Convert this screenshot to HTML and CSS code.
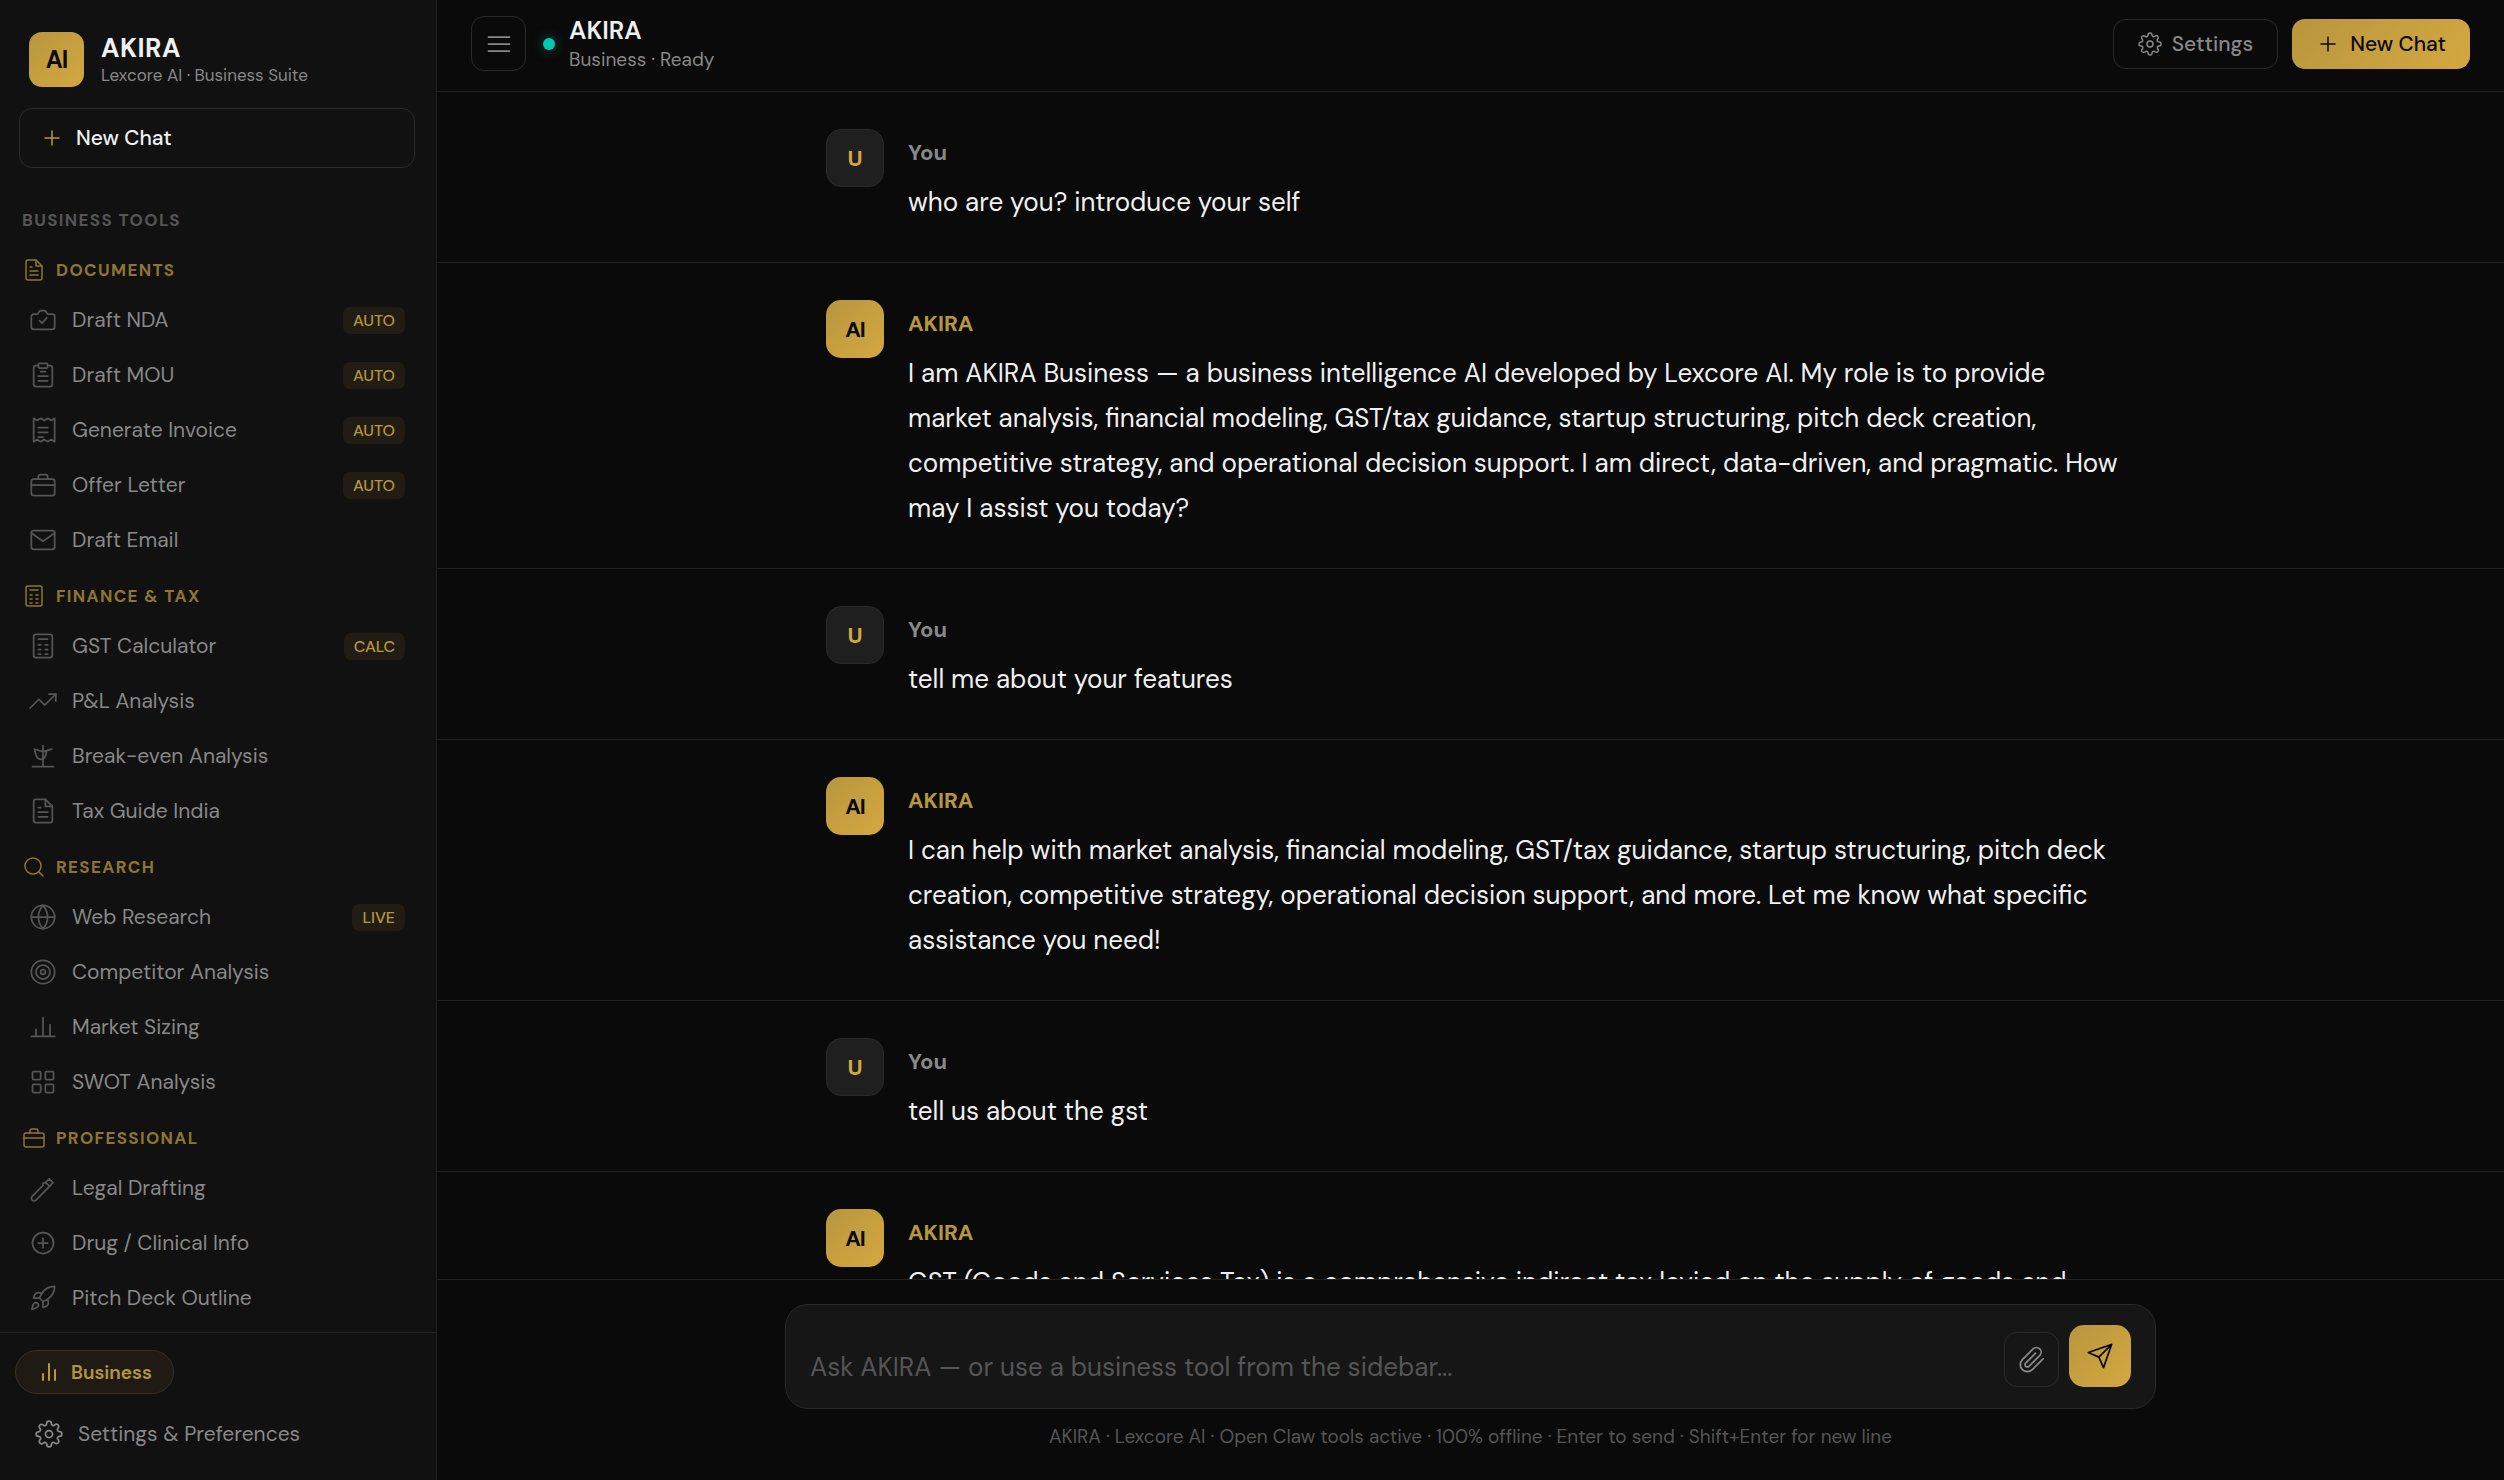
FILE: index.html
```html
<!DOCTYPE html>
<html lang="en">
<head>
    <meta charset="UTF-8">
    <meta name="viewport" content="width=device-width, initial-scale=1.0">
    <title>AKIRA Business</title>
    <link rel="stylesheet" href="styles.css">
</head>
<body>
    <!-- Icon set -->
    <svg class="icon-set" aria-hidden="true">
        <symbol id="i-plus" viewBox="0 0 24 24"><path d="M12 5v14M5 12h14"/></symbol>
        <symbol id="i-file" viewBox="0 0 24 24"><path d="M14 2H6a2 2 0 0 0-2 2v16a2 2 0 0 0 2 2h12a2 2 0 0 0 2-2V8z"/><path d="M14 2v6h6M8 9h2M8 13h8M8 17h8"/></symbol>
        <symbol id="i-nda" viewBox="0 0 24 24"><path d="M20 7h-3.2c-.6 0-1-.3-1.3-.8l-1-1.4A2 2 0 0 0 12.900 4h-2.600a2 2 0 0 0-1.500.8l-1 1.400c-.3.5-.8.8-1.300.8H4a2 2 0 0 0-2 2v9a2 2 0 0 0 2 2h16a2 2 0 0 0 2-2V9a2 2 0 0 0-2-2z"/><path d="M9 12.500l2.200 2.200 4-4.500"/></symbol>
        <symbol id="i-clipboard" viewBox="0 0 24 24"><path d="M16 4h2a2 2 0 0 1 2 2v14a2 2 0 0 1-2 2H6a2 2 0 0 1-2-2V6a2 2 0 0 1 2-2h2"/><rect x="8" y="2" width="8" height="4" rx="1"/><path d="M10 9h4M8 13h8M8 17h8"/></symbol>
        <symbol id="i-receipt" viewBox="0 0 24 24"><path d="M4 2v20l3-1.800 3 1.800 3-1.800 3 1.800 3-1.800 3 1.800V2l-3 1.800L16 2l-3 1.800L10 2 7 3.800z"/><path d="M8 10h8M8 14h8M8 18h4"/></symbol>
        <symbol id="i-briefcase" viewBox="0 0 24 24"><rect x="2" y="7" width="20" height="14" rx="2"/><path d="M16 7V5a2 2 0 0 0-2-2h-4a2 2 0 0 0-2 2v2M2 12h20"/></symbol>
        <symbol id="i-mail" viewBox="0 0 24 24"><rect x="2" y="4" width="20" height="16" rx="2"/><path d="M2 6l10 7 10-7"/></symbol>
        <symbol id="i-calc" viewBox="0 0 24 24"><rect x="4" y="2" width="16" height="20" rx="2"/><path d="M8 6h8M8 11h2M14 11h2M8 15h2M14 15h2M8 19h2M14 19h2"/></symbol>
        <symbol id="i-trend" viewBox="0 0 24 24"><path d="M23 6l-9.500 9.500-5-5L1 18"/><path d="M17 6h6v6"/></symbol>
        <symbol id="i-scale" viewBox="0 0 24 24"><path d="M12 3v18M3 21h18"/><path d="M4.700 6.200l7.300 2c2.400 0 4.800-1.600 7.500-2M4.700 6.200c.6 2.800 1.200 5.600 2.600 7.400 1.400 1.700 4.600 1.700 6-.2 1.500-2 1.400-4 2-6"/></symbol>
        <symbol id="i-search" viewBox="0 0 24 24"><circle cx="11" cy="11" r="8"/><path d="M21 21l-4.350-4.350"/></symbol>
        <symbol id="i-globe" viewBox="0 0 24 24"><circle cx="12" cy="12" r="10"/><path d="M2 12h20M12 2a15.300 15.300 0 0 1 4 10 15.300 15.300 0 0 1-4 10 15.300 15.300 0 0 1-4-10 15.300 15.300 0 0 1 4-10z"/></symbol>
        <symbol id="i-target" viewBox="0 0 24 24"><circle cx="12" cy="12" r="10"/><circle cx="12" cy="12" r="6"/><circle cx="12" cy="12" r="2"/></symbol>
        <symbol id="i-bars" viewBox="0 0 24 24"><path d="M18 20V10M12 20V4M6 20v-6"/></symbol>
        <symbol id="i-sizing" viewBox="0 0 24 24"><path d="M18 20V10M12 20V4M6 20v-6M2 20h20"/></symbol>
        <symbol id="i-grid" viewBox="0 0 24 24"><rect x="3" y="3" width="7" height="7" rx="1"/><rect x="14" y="3" width="7" height="7" rx="1"/><rect x="14" y="14" width="7" height="7" rx="1"/><rect x="3" y="14" width="7" height="7" rx="1"/></symbol>
        <symbol id="i-pen" viewBox="0 0 24 24"><path d="M17.300 4.200l3.200 3.200-2.700 3L6.200 22.200a2.100 2.100 0 0 1-3.400 0 2.100 2.100 0 0 1 .1-3.200l9.100-9.200V8l2.200-.8z"/><path d="M14.200 7.200l3.400 3.200"/></symbol>
        <symbol id="i-pluscircle" viewBox="0 0 24 24"><circle cx="12" cy="12" r="9"/><path d="M12 8v8M8 12h8"/></symbol>
        <symbol id="i-rocket" viewBox="0 0 24 24"><path d="M4.500 16.500c-1.500 1.260-2 5-2 5s3.740-.5 5-2c.71-.84.7-2.130-.09-2.910a2.180 2.180 0 0 0-2.910-.09z"/><path d="M12 15l-3-3a22 22 0 0 1 2-3.950A12.880 12.880 0 0 1 22 2c0 2.720-.78 7.500-6 11a22.350 22.350 0 0 1-4 2z"/><path d="M9 12H4s.55-3.030 2-4c1.620-1.080 5 0 5 0M12 15v5s3.030-.55 4-2c1.080-1.620 0-5 0-5"/></symbol>
        <symbol id="i-gear" viewBox="0 0 24 24"><circle cx="12" cy="12" r="3"/><path d="M19.400 15a1.650 1.650 0 0 0 .33 1.820l.06.06a2 2 0 0 1 0 2.830 2 2 0 0 1-2.830 0l-.06-.06a1.650 1.650 0 0 0-1.820-.33 1.650 1.650 0 0 0-1 1.510V21a2 2 0 0 1-2 2 2 2 0 0 1-2-2v-.09A1.650 1.650 0 0 0 9 19.400a1.650 1.650 0 0 0-1.820.33l-.06.06a2 2 0 0 1-2.830 0 2 2 0 0 1 0-2.830l.06-.06a1.650 1.650 0 0 0 .33-1.820 1.650 1.650 0 0 0-1.510-1H3a2 2 0 0 1-2-2 2 2 0 0 1 2-2h.09A1.650 1.650 0 0 0 4.600 9a1.650 1.650 0 0 0-.33-1.820l-.06-.06a2 2 0 0 1 0-2.830 2 2 0 0 1 2.830 0l.06.06a1.650 1.650 0 0 0 1.820.33H9a1.650 1.650 0 0 0 1-1.510V3a2 2 0 0 1 2-2 2 2 0 0 1 2 2v.09a1.650 1.650 0 0 0 1 1.510 1.650 1.650 0 0 0 1.820-.33l.06-.06a2 2 0 0 1 2.830 0 2 2 0 0 1 0 2.830l-.06.06a1.650 1.650 0 0 0-.33 1.820V9a1.650 1.650 0 0 0 1.510 1H21a2 2 0 0 1 2 2 2 2 0 0 1-2 2h-.09a1.650 1.650 0 0 0-1.510 1z"/></symbol>
        <symbol id="i-menu" viewBox="0 0 24 24"><path d="M3 6h18M3 12h18M3 18h18"/></symbol>
        <symbol id="i-clip" viewBox="0 0 24 24"><path d="M21.440 11.050l-9.190 9.190a6 6 0 0 1-8.490-8.490l9.190-9.190a4 4 0 0 1 5.660 5.660l-9.200 9.190a2 2 0 0 1-2.830-2.830l8.490-8.480"/></symbol>
        <symbol id="i-send" viewBox="0 0 24 24"><path d="M22 2L11 13M22 2l-7 20-4-9-9-4z"/></symbol>
    </svg>

    <div class="app">
        <aside class="sidebar">
            <div class="brand">
                <div class="brand-logo">AI</div>
                <div>
                    <div class="brand-name">AKIRA</div>
                    <div class="brand-sub">Lexcore AI · Business Suite</div>
                </div>
            </div>

            <button class="new-chat"><svg class="icon-sm"><use href="#i-plus"/></svg>New Chat</button>

            <nav class="tools">
                <h2 class="tools-label">Business Tools</h2>

                <section class="group">
                    <h3><svg class="icon-sm"><use href="#i-file"/></svg>Documents</h3>
                    <button class="tool"><svg class="icon"><use href="#i-nda"/></svg>Draft NDA<span class="badge">AUTO</span></button>
                    <button class="tool"><svg class="icon"><use href="#i-clipboard"/></svg>Draft MOU<span class="badge">AUTO</span></button>
                    <button class="tool"><svg class="icon"><use href="#i-receipt"/></svg>Generate Invoice<span class="badge">AUTO</span></button>
                    <button class="tool"><svg class="icon"><use href="#i-briefcase"/></svg>Offer Letter<span class="badge">AUTO</span></button>
                    <button class="tool"><svg class="icon"><use href="#i-mail"/></svg>Draft Email</button>
                </section>

                <section class="group">
                    <h3><svg class="icon-sm"><use href="#i-calc"/></svg>Finance &amp; Tax</h3>
                    <button class="tool"><svg class="icon"><use href="#i-calc"/></svg>GST Calculator<span class="badge">CALC</span></button>
                    <button class="tool"><svg class="icon"><use href="#i-trend"/></svg>P&amp;L Analysis</button>
                    <button class="tool"><svg class="icon"><use href="#i-scale"/></svg>Break-even Analysis</button>
                    <button class="tool"><svg class="icon"><use href="#i-file"/></svg>Tax Guide India</button>
                </section>

                <section class="group">
                    <h3><svg class="icon-sm"><use href="#i-search"/></svg>Research</h3>
                    <button class="tool"><svg class="icon"><use href="#i-globe"/></svg>Web Research<span class="badge">LIVE</span></button>
                    <button class="tool"><svg class="icon"><use href="#i-target"/></svg>Competitor Analysis</button>
                    <button class="tool"><svg class="icon"><use href="#i-sizing"/></svg>Market Sizing</button>
                    <button class="tool"><svg class="icon"><use href="#i-grid"/></svg>SWOT Analysis</button>
                </section>

                <section class="group">
                    <h3><svg class="icon-sm"><use href="#i-briefcase"/></svg>Professional</h3>
                    <button class="tool"><svg class="icon"><use href="#i-pen"/></svg>Legal Drafting</button>
                    <button class="tool"><svg class="icon"><use href="#i-pluscircle"/></svg>Drug / Clinical Info</button>
                    <button class="tool"><svg class="icon"><use href="#i-rocket"/></svg>Pitch Deck Outline</button>
                </section>
            </nav>

            <div class="sidebar-foot">
                <button class="mode-pill"><svg class="icon-sm"><use href="#i-bars"/></svg>Business</button>
                <button class="prefs"><svg class="icon"><use href="#i-gear"/></svg>Settings &amp; Preferences</button>
            </div>
        </aside>

        <main class="main">
            <header class="topbar">
                <button class="menu-btn" aria-label="Toggle sidebar"><svg class="icon"><use href="#i-menu"/></svg></button>
                <span class="status-dot"></span>
                <div class="topbar-text">
                    <h1>AKIRA</h1>
                    <p>Business · Ready</p>
                </div>
                <button class="btn btn-outline"><svg class="icon-sm"><use href="#i-gear"/></svg>Settings</button>
                <button class="btn btn-gold"><svg class="icon-sm"><use href="#i-plus"/></svg>New Chat</button>
            </header>

            <div class="messages">
                <article class="message user">
                    <div class="message-inner">
                        <div class="avatar">U</div>
                        <div class="message-body">
                            <div class="sender">You</div>
                            <p>who are you? introduce your self</p>
                        </div>
                    </div>
                </article>
                <article class="message ai">
                    <div class="message-inner">
                        <div class="avatar">AI</div>
                        <div class="message-body">
                            <div class="sender">AKIRA</div>
                            <p>I am AKIRA Business — a business intelligence AI developed by Lexcore AI. My role is to provide market analysis, financial modeling, GST/tax guidance, startup structuring, pitch deck creation, competitive strategy, and operational decision support. I am direct, data-driven, and pragmatic. How may I assist you today?</p>
                        </div>
                    </div>
                </article>
                <article class="message user">
                    <div class="message-inner">
                        <div class="avatar">U</div>
                        <div class="message-body">
                            <div class="sender">You</div>
                            <p>tell me about your features</p>
                        </div>
                    </div>
                </article>
                <article class="message ai">
                    <div class="message-inner">
                        <div class="avatar">AI</div>
                        <div class="message-body">
                            <div class="sender">AKIRA</div>
                            <p>I can help with market analysis, financial modeling, GST/tax guidance, startup structuring, pitch deck creation, competitive strategy, operational decision support, and more. Let me know what specific assistance you need!</p>
                        </div>
                    </div>
                </article>
                <article class="message user">
                    <div class="message-inner">
                        <div class="avatar">U</div>
                        <div class="message-body">
                            <div class="sender">You</div>
                            <p>tell us about the gst</p>
                        </div>
                    </div>
                </article>
                <article class="message ai">
                    <div class="message-inner">
                        <div class="avatar">AI</div>
                        <div class="message-body">
                            <div class="sender">AKIRA</div>
                            <p>GST (Goods and Services Tax) is a comprehensive indirect tax levied on the supply of goods and</p>
                        </div>
                    </div>
                </article>
            </div>

            <footer class="composer">
                <div class="input-box">
                    <textarea rows="1" aria-label="Message" placeholder="Ask AKIRA — or use a business tool from the sidebar..."></textarea>
                    <button class="attach-btn" aria-label="Attach file"><svg class="icon"><use href="#i-clip"/></svg></button>
                    <button class="send-btn" aria-label="Send"><svg class="icon"><use href="#i-send"/></svg></button>
                </div>
                <p class="hint">AKIRA · Lexcore AI · Open Claw tools active · 100% offline · Enter to send · Shift+Enter for new line</p>
            </footer>
        </main>
    </div>
</body>
</html>
```

FILE: styles.css
```css
:root {
    --bg: #0a0a0a;
    --panel: #111111;
    --line: #222222;
    --line-strong: #2a2a2a;
    --text: #f0f0f0;
    --muted: #888888;
    --dim: #555555;
    --gold: #b8963e;
    --gold-grad: linear-gradient(135deg, #b8963e, #d4a840);
}

* {
    box-sizing: border-box;
    margin: 0;
    padding: 0;
}

body {
    background: var(--bg);
    color: var(--text);
    font-family: "DM Sans", Inter, sans-serif;
    font-size: 21px;
}

button,
textarea {
    font: inherit;
    color: inherit;
    background: none;
    border: none;
}

button {
    cursor: pointer;
}

svg {
    fill: none;
    stroke: currentColor;
    stroke-width: 1.5;
    stroke-linecap: round;
    stroke-linejoin: round;
    flex-shrink: 0;
}

.icon-set {
    display: none;
}

.icon {
    width: 28px;
    height: 28px;
}

.icon-sm {
    width: 24px;
    height: 24px;
}

.app {
    display: flex;
    height: 100vh;
}

/* Sidebar */
.sidebar {
    width: 437px;
    flex-shrink: 0;
    display: flex;
    flex-direction: column;
    background: var(--panel);
    border-right: 1px solid var(--line);
}

.brand {
    display: flex;
    align-items: center;
    gap: 17px;
    padding: 32px 29px 21px;
}

.brand-logo {
    width: 55px;
    height: 55px;
    border-radius: 13px;
    background: var(--gold-grad);
    color: var(--bg);
    display: flex;
    align-items: center;
    justify-content: center;
    font-size: 24px;
    font-weight: 700;
    letter-spacing: -1px;
}

.brand-name {
    font-size: 26px;
    line-height: 32px;
    font-weight: 700;
    letter-spacing: 0.02em;
}

.brand-sub {
    font-size: 17px;
    line-height: 23px;
    color: var(--muted);
}

.new-chat {
    height: 60px;
    margin: 0 21px 0 19px;
    padding: 0 20px;
    display: flex;
    align-items: center;
    gap: 12px;
    border: 1px solid var(--line-strong);
    border-radius: 13px;
    font-weight: 500;
}

.new-chat svg {
    color: var(--gold);
}

.tools {
    flex: 1;
    min-height: 0;
    overflow: hidden;
    padding: 42px 22px 0;
}

.tools-label {
    font-size: 17px;
    line-height: 20px;
    font-weight: 700;
    letter-spacing: 0.08em;
    text-transform: uppercase;
    color: var(--dim);
    margin-bottom: 28px;
}

.group {
    margin-bottom: 17px;
}

.group h3 {
    display: flex;
    align-items: center;
    gap: 10px;
    font-size: 17px;
    line-height: 24px;
    font-weight: 700;
    letter-spacing: 0.08em;
    text-transform: uppercase;
    color: #8f7433;
    margin-bottom: 11px;
}

.tool {
    width: 100%;
    height: 54px;
    margin-bottom: 1px;
    padding: 0 9px 0 7px;
    display: flex;
    align-items: center;
    gap: 15px;
    color: var(--muted);
    text-align: left;
}

.tool svg {
    color: var(--dim);
}

.badge {
    margin-left: auto;
    padding: 0 10px;
    border-radius: 7px;
    background: #211c14;
    color: var(--gold);
    font-size: 16px;
    line-height: 27px;
    font-weight: 500;
}

.sidebar-foot {
    border-top: 1px solid var(--line);
    padding: 17px 15px 20px;
}

.mode-pill {
    height: 44px;
    padding: 0 21px;
    display: flex;
    align-items: center;
    gap: 10px;
    border: 1px solid #3b3018;
    border-radius: 22px;
    background: #1f1b14;
    color: var(--gold);
    font-size: 19px;
    font-weight: 600;
}

.mode-pill svg {
    stroke-width: 2;
}

.prefs {
    height: 52px;
    margin-top: 14px;
    padding: 0 20px;
    display: flex;
    align-items: center;
    gap: 15px;
    color: var(--muted);
}

/* Main column */
.main {
    flex: 1;
    min-width: 0;
    display: flex;
    flex-direction: column;
}

.topbar {
    height: 92px;
    flex-shrink: 0;
    padding: 0 34px 4px;
    display: flex;
    align-items: center;
    border-bottom: 1px solid var(--line);
}

.menu-btn,
.attach-btn {
    width: 55px;
    height: 55px;
    display: flex;
    align-items: center;
    justify-content: center;
    border: 1px solid var(--line-strong);
    border-radius: 13px;
    color: var(--muted);
}

.status-dot {
    width: 12px;
    height: 12px;
    margin: 0 14px 0 17px;
    border-radius: 50%;
    background: #00c9b1;
    box-shadow: 0 0 13px rgba(0, 201, 177, 0.4);
}

.topbar-text {
    flex: 1;
}

.topbar-text h1 {
    font-size: 25px;
    line-height: 32px;
    font-weight: 600;
}

.topbar-text p {
    font-size: 19px;
    line-height: 26px;
    color: var(--muted);
}

.btn {
    height: 50px;
    margin-left: 14px;
    padding: 0 24px;
    display: flex;
    align-items: center;
    gap: 10px;
    border-radius: 13px;
    font-weight: 500;
}

.btn-outline {
    border: 1px solid var(--line-strong);
    color: var(--muted);
}

.btn-gold {
    background: var(--gold-grad);
    color: var(--bg);
}

/* Messages */
.messages {
    flex: 1;
    min-height: 0;
    overflow: hidden;
}

.message {
    padding: 37px 0;
    border-bottom: 1px solid var(--line);
}

.message-inner {
    max-width: 1371px;
    margin: 0 auto;
    padding: 0 34px 0 41px;
    display: flex;
    gap: 24px;
}

.avatar {
    width: 58px;
    height: 58px;
    flex-shrink: 0;
    display: flex;
    align-items: center;
    justify-content: center;
    border-radius: 15px;
    font-size: 22px;
    font-weight: 700;
}

.user .avatar {
    background: #1f1f1f;
    border: 1px solid var(--line-strong);
    color: #d4a840;
}

.ai .avatar {
    background: var(--gold-grad);
    color: var(--bg);
    letter-spacing: -1px;
}

.message-body {
    flex: 1;
}

.sender {
    font-size: 22px;
    line-height: 47px;
    font-weight: 700;
    margin-bottom: 4px;
    color: var(--muted);
}

.ai .sender {
    color: var(--gold);
}

.message-body p {
    font-size: 26px;
    line-height: 45px;
}

/* Composer */
.composer {
    flex-shrink: 0;
    padding: 24px 40px 31px;
    border-top: 1px solid var(--line);
}

.input-box {
    max-width: 1371px;
    margin: 0 auto;
    padding: 20px 24px 21px;
    display: flex;
    align-items: flex-end;
    gap: 10px;
    background: #161616;
    border: 1px solid var(--line-strong);
    border-radius: 23px;
}

.input-box textarea {
    flex: 1;
    height: 42px;
    font-size: 26px;
    line-height: 44px;
    resize: none;
    outline: none;
    overflow: hidden;
}

.input-box textarea::placeholder {
    color: var(--dim);
}

.send-btn {
    width: 62px;
    height: 62px;
    display: flex;
    align-items: center;
    justify-content: center;
    border-radius: 15px;
    background: var(--gold-grad);
    color: var(--bg);
}

.hint {
    margin-top: 16px;
    font-size: 19px;
    line-height: 24px;
    text-align: center;
    color: var(--dim);
}
```
